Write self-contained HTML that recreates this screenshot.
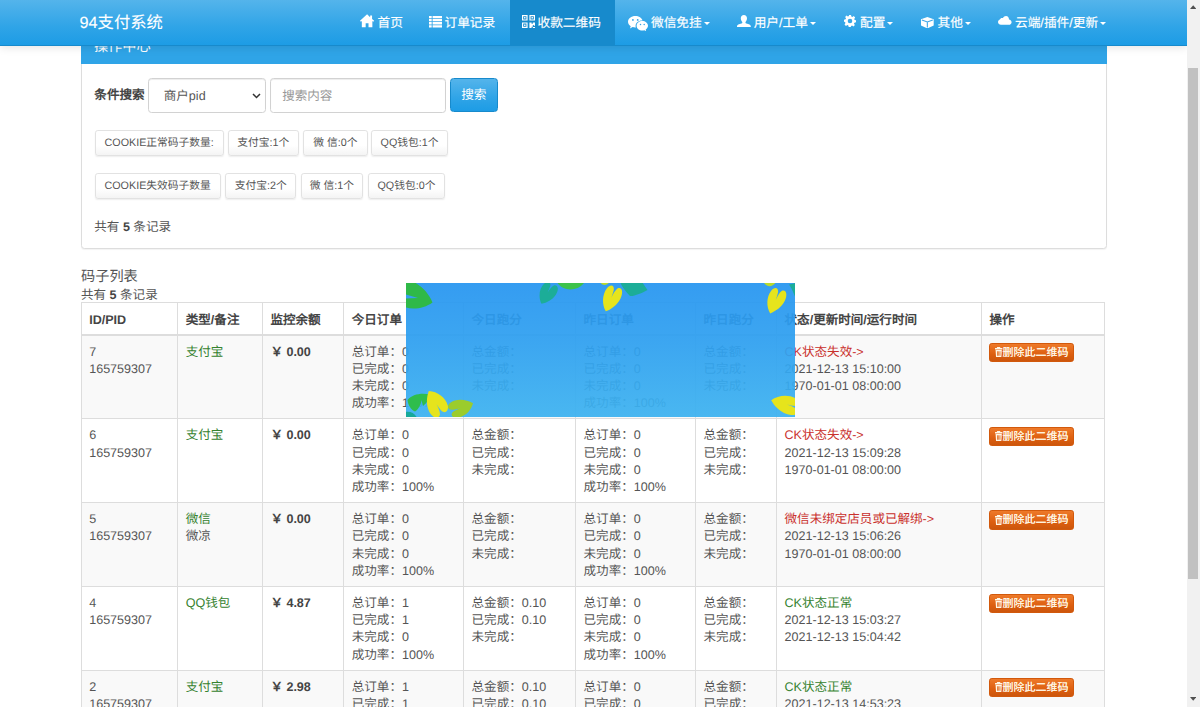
<!DOCTYPE html>
<html lang="zh-CN">
<head>
<meta charset="utf-8">
<title>94支付系统</title>
<style>
*{box-sizing:border-box;}
html,body{margin:0;padding:0;}
body{width:1200px;height:707px;overflow:hidden;position:relative;background:#fff;
  font-family:"Liberation Sans",sans-serif;font-size:12.55px;line-height:17.2px;color:#555;text-rendering:geometricPrecision;}
.abs{position:absolute;}
/* navbar */
#nav{position:absolute;left:0;top:0;width:1186.8px;height:45.5px;
  background:linear-gradient(#54b4eb,#2fa4e7 60%,#1d9ce5);border-bottom:1px solid #178acc;
  box-shadow:0 1px 9px rgba(0,0,0,.12);z-index:5;}
#brand{position:absolute;left:79.5px;top:0;height:45px;line-height:47.6px;font-size:16.3px;color:#fff;white-space:nowrap;}
.ni{position:absolute;top:0;height:44.5px;line-height:47px;color:#fff;white-space:nowrap;font-size:12.7px;}
.ni.act{background:#178acc;}
.ni svg{position:absolute;fill:#fff;}
.ni span{position:absolute;top:0;-webkit-text-stroke:0.25px rgba(255,255,255,.7);}
#brand{-webkit-text-stroke:0.2px rgba(255,255,255,.6);}
.caret{display:inline-block;position:relative;top:-0.3px;margin-left:1.8px;vertical-align:middle;width:0;height:0;border-left:3.8px solid transparent;border-right:3.8px solid transparent;border-top:3.8px solid #fff;}
/* panel */
#panel{position:absolute;left:80.5px;top:20px;width:1026px;height:228.5px;border:1px solid #ddd;border-radius:3.5px;
  box-shadow:0 1px 1px rgba(0,0,0,.05);background:#fff;}
#phead{position:absolute;left:80.5px;top:20px;width:1026px;height:44px;background:#2fa4e7;border-radius:3.5px 3.5px 0 0;}
.lbl{font-weight:bold;color:#444;}
.fc{position:absolute;height:34.4px;border:1px solid #d2d2d2;border-radius:3.5px;background:#fff;
  box-shadow:inset 0 1px 1px rgba(0,0,0,.075);}
.btnp{position:absolute;left:449.7px;top:78.3px;width:48.3px;height:33.6px;border-radius:3.5px;border:1px solid #178acc;
  background:linear-gradient(#54b4eb,#2fa4e7 60%,#1d9ce5);color:#fff;text-align:center;line-height:32.6px;font-size:12.7px;}
.bs{position:absolute;height:26px;border:1px solid #e2e2e2;border-radius:2.8px;background:linear-gradient(#fff,#fff 60%,#f4f4f4);color:#555;
  font-size:10.75px;line-height:24.6px;text-align:center;white-space:nowrap;box-shadow:0 1px 1.5px rgba(0,0,0,.07);}
/* table */
#tbl{position:absolute;left:80.6px;top:301.6px;width:1023.9px;border-collapse:collapse;table-layout:fixed;}
#tbl th,#tbl td{border:1px solid #ddd;padding:6.6px 7.4px 6.6px 7.6px;vertical-align:top;text-align:left;font-size:12.55px;line-height:17.2px;white-space:nowrap;overflow:hidden;}
#tbl th{font-weight:bold;color:#444;height:32.5px;border-bottom:2px solid #ddd;padding-top:9px;padding-bottom:4.3px;}
#tbl td{height:83.72px;padding-top:8px;padding-bottom:6px;}
#tbl tr.odd td{background:#f9f9f9;}
.g{color:#35822f;}
.r{color:#c9302c;}
.del{display:inline-block;height:19.3px;line-height:18.6px;padding:0 4px 0 5px;border:1px solid #d2590c;border-radius:2.8px;
  background:linear-gradient(#ee7a2a,#dd5f10 60%,#cc560c);color:#fff7e6;font-size:11px;white-space:nowrap;margin:-0.9px 0 0 -0.4px;vertical-align:top;text-shadow:0 0 .6px #fff3d6;}
.del svg{display:inline-block;width:7.4px;height:10px;vertical-align:-1.2px;fill:#fff7e6;}
b{color:#444;}
/* overlay */
#ov{position:absolute;left:406px;top:283px;width:389px;height:134px;overflow:hidden;
  background:linear-gradient(rgba(40,150,240,.94),rgba(46,160,240,.93) 45%,rgba(60,178,240,.93));}
/* scrollbar */
#sb{position:absolute;left:1186.8px;top:0;width:13.2px;height:707px;background:#f1f1f1;z-index:6;}
#sb .th{position:absolute;left:1.5px;top:68px;width:10px;height:511px;background:#c1c1c1;}
</style>
</head>
<body>

<div id="panel"></div>
<div id="phead"><span style="position:absolute;left:13.4px;top:19.4px;font-size:14.2px;line-height:17px;color:#fff;white-space:nowrap;">操作中心</span></div>

<div id="nav">
  <div id="brand">94支付系统</div>
  <div class="ni" style="left:347.3px;width:67px;"><svg style="left:13.2px;top:14.2px" width="14.2" height="13.5" viewBox="0 0 14 13"><path d="M7 0.2 L0 6.6 L0.9 7.5 L1.8 6.7 V13 H5.6 V9 H8.4 V13 H12.2 V6.7 L13.1 7.5 L14 6.6 L11.9 4.7 V1.2 H10 V3 Z"/></svg><span style="left:30.2px;">首页</span></div>
  <div class="ni" style="left:415.5px;width:93px;"><svg style="left:13px;top:16px" width="13.5" height="11.5" viewBox="0 0 13.5 11.5"><path d="M0 0h2.7v2.3H0zM3.6 0h9.9v2.3H3.6zM0 3.05h2.7v2.3H0zM3.6 3.05h9.9v2.3H3.6zM0 6.1h2.7v2.3H0zM3.6 6.1h9.9v2.3H3.6zM0 9.15h2.7v2.3H0zM3.6 9.15h9.9v2.3H3.6z"/></svg><span style="left:29px;">订单记录</span></div>
  <div class="ni act" style="left:509.5px;width:105.5px;"><svg style="left:12.4px;top:15px" width="13" height="13" viewBox="0 0 13 13"><path fill-rule="evenodd" d="M0 0h5.6v5.6H0zM1.2 1.2v3.2h3.2V1.2zM2.1 2.1h1.4v1.4H2.1zM7.4 0H13v5.6H7.4zM8.6 1.2v3.2h3.2V1.2zM9.5 2.1h1.4v1.4H9.5zM0 7.4h5.6V13H0zM1.2 8.6v3.2h3.2V8.6zM2.1 9.5h1.4v1.4H2.1zM7.4 7.4h2.2v1.4h1.2V7.4H13v3.4h-1.2V9.9h-1v1.8H9.6V13H7.4zM10.8 11.9H13V13h-2.2z"/></svg><span style="left:28px;">收款二维码</span></div>
  <div class="ni" style="left:615.5px;width:109px;"><svg style="left:12.5px;top:16px" width="20" height="14.6" viewBox="0 0 20 14.6"><path d="M7.3 0C3.3 0 0 2.6 0 5.8c0 1.8 1 3.4 2.7 4.5L2 12.5l2.6-1.4c.9.3 1.7.4 2.7.4h.6c-.2-.5-.3-1.1-.3-1.6 0-3 2.900-5.400 6.400-5.400h.5C13.900 1.900 10.900 0 7.300 0z"/><path d="M20 9.800c0-2.700-2.700-4.800-5.700-4.800-3.200 0-5.700 2.100-5.700 4.800s2.500 4.800 5.700 4.800c.7 0 1.400-.2 2-.4l1.900 1-.5-1.700c1.400-1 2.300-2.300 2.300-3.700z"/><circle cx="4.900" cy="3.900" r=".9" fill="#35a2e6"/><circle cx="9.700" cy="3.900" r=".9" fill="#35a2e6"/><circle cx="12.500" cy="8.600" r=".75" fill="#35a2e6"/><circle cx="16.200" cy="8.600" r=".75" fill="#35a2e6"/></svg><span style="left:35.5px;">微信免挂<i class="caret"></i></span></div>
  <div class="ni" style="left:724.3px;width:105px;"><svg style="left:13.1px;top:15.100px" width="13.800" height="12.400" viewBox="0 0 13.800 12.400"><path d="M6.900 0c1.900 0 3.100 1.400 3.100 3.300 0 1.500-.6 2.900-1.500 3.600v.9c0 .4.300.6.900.8 2.400.7 4.400 1.400 4.400 2.600v1.200H0v-1.200c0-1.200 2-1.900 4.400-2.600.6-.2.900-.4.900-.8v-.9C4.400 6.200 3.800 4.800 3.800 3.300 3.800 1.400 5 0 6.900 0z"/></svg><span style="left:29.4px;">用户/工单<i class="caret"></i></span></div>
  <div class="ni" style="left:830.5px;width:77px;"><svg style="left:13.500px;top:15.300px" width="12" height="12" viewBox="0 0 12 12"><path fill-rule="evenodd" d="M5 0h2l.35 1.600 1 .42 1.400-.9 1.400 1.400-.9 1.400.42 1L12 5.300v2l-1.600.35-.42 1 .9 1.400-1.400 1.400-1.400-.9-1 .42L6.700 12h-2l-.35-1.600-1-.42-1.400.9-1.400-1.400.9-1.400-.42-1L0 6.700v-2l1.600-.35.42-1-.9-1.400 1.400-1.400 1.400.9 1-.42zM6 3.700A2.300 2.300 0 1 0 6 8.300 2.300 2.300 0 1 0 6 3.700z"/></svg><span style="left:29.5px;">配置<i class="caret"></i></span></div>
  <div class="ni" style="left:907.3px;width:78px;"><svg style="left:13.600px;top:16.600px" width="12.700" height="11.400" viewBox="0 0 12.700 11.400"><path d="M6.350 0 L12.700 2.300 V8.600 L6.350 11.400 L0 8.600 V2.300 Z"/><path d="M0.900 2.900 L6.350 5 L11.800 2.900 M6.350 5 V10.600" fill="none" stroke="#3ea6e8" stroke-width="1.100"/></svg><span style="left:30.2px;">其他<i class="caret"></i></span></div>
  <div class="ni" style="left:985.5px;width:135px;"><svg style="left:12.900px;top:15.900px" width="13.600" height="8.800" viewBox="0 0 13.600 8.800"><path d="M11 3.600c1.500.2 2.600 1.300 2.600 2.600 0 1.500-1.200 2.600-2.800 2.600H3C1.300 8.800 0 7.600 0 6.100 0 4.900.800 3.900 2 3.600 2.100 2.600 3 1.900 4 1.900c.3 0 .6.100.9.200C5.500.800 6.700 0 8 0c1.800 0 3.100 1.500 3 3.600z"/></svg><span style="left:29.5px;">云端/插件/更新<i class="caret"></i></span></div>
</div>

<!-- search row -->
<div class="abs lbl" style="left:94.3px;top:86.8px;font-size:12.6px;">条件搜索</div>
<div class="fc" style="left:148.2px;top:78.3px;width:117.7px;"><span class="abs" style="left:14.6px;top:8.8px;color:#555;">商户pid</span>
  <svg class="abs" style="left:103px;top:12.5px;" width="9" height="8" viewBox="0 0 9 8"><path d="M1 2 L4.5 5.5 L8 2" fill="none" stroke="#333" stroke-width="1.5"/></svg></div>
<div class="fc" style="left:270.2px;top:78.3px;width:175.7px;"><span class="abs" style="left:11px;top:8.8px;color:#999;">搜索内容</span></div>
<div class="btnp">搜索</div>

<!-- button rows -->
<div class="bs" style="left:94.5px;top:129.6px;width:129.4px;">COOKIE正常码子数量:</div>
<div class="bs" style="left:227.7px;top:129.6px;width:71.3px;">支付宝:1个</div>
<div class="bs" style="left:303px;top:129.6px;width:64.8px;">微 信:0个</div>
<div class="bs" style="left:370.8px;top:129.6px;width:77.6px;">QQ钱包:1个</div>

<div class="bs" style="left:94.5px;top:173.3px;width:126.3px;">COOKIE失效码子数量</div>
<div class="bs" style="left:225.2px;top:173.3px;width:71.3px;">支付宝:2个</div>
<div class="bs" style="left:300.5px;top:173.3px;width:62.9px;">微 信:1个</div>
<div class="bs" style="left:367.5px;top:173.3px;width:77.9px;">QQ钱包:0个</div>

<div class="abs" style="left:94.3px;top:218.6px;">共有 <b>5</b> 条记录</div>

<div class="abs" style="left:81px;top:269px;font-size:14.2px;color:#555;">码子列表</div>
<div class="abs" style="left:81px;top:286.7px;">共有 <b>5</b> 条记录</div>

<table id="tbl">
<colgroup><col style="width:96.6px"><col style="width:84.6px"><col style="width:81.4px"><col style="width:119.8px"><col style="width:112px"><col style="width:120px"><col style="width:81px"><col style="width:205px"><col style="width:123.5px"></colgroup>
<tr><th>ID/PID</th><th>类型/备注</th><th>监控余额</th><th>今日订单</th><th>今日跑分</th><th>昨日订单</th><th>昨日跑分</th><th>状态/更新时间/运行时间</th><th>操作</th></tr>
<tr class="odd"><td>7<br>165759307</td><td><span class="g">支付宝</span></td><td><b>￥ 0.00</b></td><td>总订单：0<br>已完成：0<br>未完成：0<br>成功率：100%</td><td>总金额：<br>已完成：<br>未完成：</td><td>总订单：0<br>已完成：0<br>未完成：0<br>成功率：100%</td><td>总金额：<br>已完成：<br>未完成：</td><td><span class="r">CK状态失效-&gt;</span><br>2021-12-13 15:10:00<br>1970-01-01 08:00:00</td><td><span class="del"><svg viewBox="0 0 8.8 10" preserveAspectRatio="none"><path d="M2.600 0h3.400l.5.900h2.300v1.500H0V.900h2.100zM.7 3.100h7.400l-.5 6.900H1.200zM2.500 4.200v4.600h.9V4.200zM4 4.200v4.600h.9V4.200zM5.500 4.200v4.600h.9V4.200z" fill-rule="evenodd"/></svg>删除此二维码</span></td></tr>
<tr><td>6<br>165759307</td><td><span class="g">支付宝</span></td><td><b>￥ 0.00</b></td><td>总订单：0<br>已完成：0<br>未完成：0<br>成功率：100%</td><td>总金额：<br>已完成：<br>未完成：</td><td>总订单：0<br>已完成：0<br>未完成：0<br>成功率：100%</td><td>总金额：<br>已完成：<br>未完成：</td><td><span class="r">CK状态失效-&gt;</span><br>2021-12-13 15:09:28<br>1970-01-01 08:00:00</td><td><span class="del"><svg viewBox="0 0 8.8 10" preserveAspectRatio="none"><path d="M2.600 0h3.400l.5.900h2.300v1.500H0V.900h2.100zM.7 3.100h7.400l-.5 6.900H1.200zM2.500 4.200v4.600h.9V4.200zM4 4.200v4.600h.9V4.200zM5.500 4.200v4.600h.9V4.200z" fill-rule="evenodd"/></svg>删除此二维码</span></td></tr>
<tr class="odd"><td>5<br>165759307</td><td><span class="g">微信</span><br>微凉</td><td><b>￥ 0.00</b></td><td>总订单：0<br>已完成：0<br>未完成：0<br>成功率：100%</td><td>总金额：<br>已完成：<br>未完成：</td><td>总订单：0<br>已完成：0<br>未完成：0<br>成功率：100%</td><td>总金额：<br>已完成：<br>未完成：</td><td><span class="r">微信未绑定店员或已解绑-&gt;</span><br>2021-12-13 15:06:26<br>1970-01-01 08:00:00</td><td><span class="del"><svg viewBox="0 0 8.8 10" preserveAspectRatio="none"><path d="M2.600 0h3.400l.5.900h2.300v1.500H0V.900h2.100zM.7 3.100h7.400l-.5 6.900H1.200zM2.500 4.200v4.600h.9V4.200zM4 4.200v4.600h.9V4.200zM5.500 4.200v4.600h.9V4.200z" fill-rule="evenodd"/></svg>删除此二维码</span></td></tr>
<tr><td>4<br>165759307</td><td><span class="g">QQ钱包</span></td><td><b>￥ 4.87</b></td><td>总订单：1<br>已完成：1<br>未完成：0<br>成功率：100%</td><td>总金额：0.10<br>已完成：0.10<br>未完成：</td><td>总订单：0<br>已完成：0<br>未完成：0<br>成功率：100%</td><td>总金额：<br>已完成：<br>未完成：</td><td><span class="g">CK状态正常</span><br>2021-12-13 15:03:27<br>2021-12-13 15:04:42</td><td><span class="del"><svg viewBox="0 0 8.8 10" preserveAspectRatio="none"><path d="M2.600 0h3.400l.5.900h2.300v1.500H0V.900h2.100zM.7 3.100h7.400l-.5 6.900H1.200zM2.500 4.200v4.600h.9V4.200zM4 4.200v4.600h.9V4.200zM5.500 4.200v4.600h.9V4.200z" fill-rule="evenodd"/></svg>删除此二维码</span></td></tr>
<tr class="odd"><td>2<br>165759307</td><td><span class="g">支付宝</span></td><td><b>￥ 2.98</b></td><td>总订单：1<br>已完成：1<br>未完成：0<br>成功率：100%</td><td>总金额：0.10<br>已完成：0.10<br>未完成：</td><td>总订单：0<br>已完成：0<br>未完成：0<br>成功率：100%</td><td>总金额：<br>已完成：<br>未完成：</td><td><span class="g">CK状态正常</span><br>2021-12-13 14:53:23<br>2021-12-13 14:55:00</td><td><span class="del"><svg viewBox="0 0 8.8 10" preserveAspectRatio="none"><path d="M2.600 0h3.400l.5.900h2.300v1.500H0V.900h2.100zM.7 3.100h7.400l-.5 6.900H1.200zM2.500 4.200v4.600h.9V4.200zM4 4.200v4.600h.9V4.200zM5.500 4.200v4.600h.9V4.200z" fill-rule="evenodd"/></svg>删除此二维码</span></td></tr>
</table>

<div id="ov"><svg width="389" height="134" viewBox="0 0 389 134" style="position:absolute;left:0;top:0;">
<!-- top-left green -->
<path d="M0 -4L8 -1C17 4 23 11 26.500 19.500C19 25 8 27 0 24.500L0 15.500L12 15L0 11.500Z" fill="#2fb948"/>
<!-- teal top centre -->
<path d="M0 0C-8 -5 -12.5 -14 -9.5 -22C-7.5 -27 -2 -28 -0.3 -23C0.1 -21 0.3 -18 0.4 -15C0.8 -19 1.5 -23 3.5 -25.5C7.5 -29 13 -25 12 -17C11 -10 6 -4 0 0Z" transform="translate(135.500 20.800) rotate(27) scale(0.72 0.86)" fill="#1cad98"/>
<!-- green top strip -->
<path d="M151 -1C156 8 170 9.500 178 0L178 -1Z" fill="#3dc24a"/>
<!-- yellow-green bits -->
<path d="M194 -1C196 3 201 3 203.500 -1Z" fill="#b8d92c"/>
<path d="M357.500 -1C360 4.500 367 4.500 370 -1Z" fill="#b8d92c"/>
<!-- teal right of yellow -->
<path d="M214 -1L236 -1C238 2 240 4.500 241.500 7C236 10 228 13.500 224 13C220 9 216 4 214 -1Z" fill="#1cad98"/>
<!-- yellow top centre -->
<path d="M0 0C-8 -5 -12.5 -14 -9.5 -22C-7.5 -27 -2 -28 -0.3 -23C0.1 -21 0.3 -18 0.4 -15C0.8 -19 1.5 -23 3.5 -25.5C7.5 -29 13 -25 12 -17C11 -10 6 -4 0 0Z" transform="translate(199.8 28.3) rotate(21) scale(0.76 1.0)" fill="#e6e41c"/>
<!-- teal right edge -->
<path d="M383 1.500C386 6 388 11 390 16L390 0Z" fill="#1cad98"/>
<!-- yellow top right -->
<path d="M0 0C-8 -5 -12.5 -14 -9.5 -22C-7.5 -27 -2 -28 -0.3 -23C0.1 -21 0.3 -18 0.4 -15C0.8 -19 1.5 -23 3.5 -25.5C7.5 -29 13 -25 12 -17C11 -10 6 -4 0 0Z" transform="translate(364.2 30.4) rotate(21) scale(0.76 0.98)" fill="#e6e41c"/>
<!-- bottom-left teal -->
<path d="M-1 129C4 128 9 130 11 135L-1 135Z" fill="#18a99a"/>
<!-- bottom-left green -->
<path d="M24 111.500C16 109.500 6 111 1.500 117C2 122 5 127 9 128.500C13 126 15 121 15.500 117L17 123C21 120 23.500 116 24 111.500Z" fill="#2fbd4c"/>
<!-- bottom-left yellow -->
<path d="M0 0C-8 -5 -12.5 -14 -9.5 -22C-7.5 -27 -2 -28 -0.3 -23C0.1 -21 0.3 -18 0.4 -15C0.8 -19 1.5 -23 3.5 -25.5C7.5 -29 13 -25 12 -17C11 -10 6 -4 0 0Z" transform="translate(22.800 108) rotate(148) scale(0.88 1.02)" fill="#e6e41c"/>
<!-- bottom-left yellow-green -->
<path d="M0 0C-8 -5 -12.5 -14 -9.5 -22C-7.5 -27 -2 -28 -0.3 -23C0.1 -21 0.3 -18 0.4 -15C0.8 -19 1.5 -23 3.5 -25.5C7.5 -29 13 -25 12 -17C11 -10 6 -4 0 0Z" transform="translate(67 120.3) rotate(-112) scale(0.78 0.92)" fill="#9bcc2c"/>
<!-- bottom-right yellow -->
<path d="M0 0C-8 -5 -12.5 -14 -9.5 -22C-7.5 -27 -2 -28 -0.3 -23C0.1 -21 0.3 -18 0.4 -15C0.8 -19 1.5 -23 3.5 -25.5C7.5 -29 13 -25 12 -17C11 -10 6 -4 0 0Z" transform="translate(365.2 117.2) rotate(104) scale(0.8 1.08)" fill="#e6e41c"/>
</svg></div>

<div id="sb"><div class="th"></div>
  <svg class="abs" style="left:3.3px;top:5px;" width="6.400" height="4" viewBox="0 0 8 5"><path d="M0 5 L4 0.300 L8 5Z" fill="#505050"/></svg>
  <svg class="abs" style="left:3.3px;top:697.300px;" width="6.400" height="4" viewBox="0 0 8 5"><path d="M0 0 L4 4.700 L8 0Z" fill="#505050"/></svg>
</div>
</body>
</html>
